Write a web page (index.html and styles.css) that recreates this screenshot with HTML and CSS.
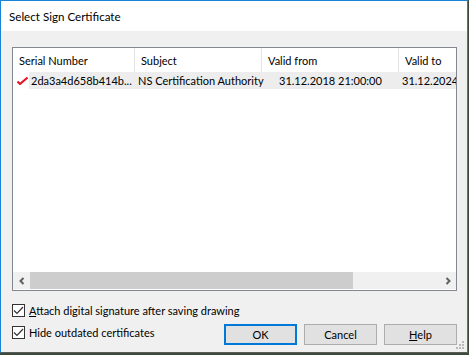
FILE: index.html
```html
<!DOCTYPE html>
<html lang="en">
<head>
  <meta charset="UTF-8" />
  <title>Select Sign Certificate</title>
  <link rel="stylesheet" href="styles.css">
</head>
<body>
  <div class="window">
    <div class="titlebar">Select Sign Certificate</div>

    <div class="content">
      <div class="listbox">
        <div class="grid header">
          <div class="col">Serial Number</div>
          <div class="col">Subject</div>
          <div class="col">Valid from</div>
          <div class="col">Valid to</div>
        </div>
        <div class="row-wrap">
          <svg class="tick" width="11" height="8" viewBox="0 0 11 8">
            <polyline points="0.5,4.5 3,7 10.5,0.5" fill="none" stroke="#e81123" stroke-width="2"/>
          </svg>
          <div class="grid row">
            <div class="cell serial">2da3a4d658b414b...</div>
            <div class="cell subject">NS Certification Authority</div>
            <div class="cell date">31.12.2018 21:00:00</div>
            <div class="cell date-to">31.12.2024</div>
          </div>
        </div>
        <div class="spacer"></div>
        <div class="hscroll">
          <div class="arrow">
            <svg width="8" height="8" viewBox="0 0 8 8"><polyline points="5.5,1 2.5,4 5.5,7" fill="none" stroke="#606060" stroke-width="2"/></svg>
          </div>
          <div class="thumb"></div>
          <div class="track"></div>
          <div class="arrow">
            <svg width="8" height="8" viewBox="0 0 8 8"><polyline points="2.5,1 5.5,4 2.5,7" fill="none" stroke="#606060" stroke-width="2"/></svg>
          </div>
        </div>
      </div>

      <div class="options">
        <label class="check">
          <span class="box"><svg width="11" height="9" viewBox="0 0 11 9"><polyline points="1,4.5 4,7.5 10,1" fill="none" stroke="#333" stroke-width="1.2"/></svg></span>
          <span><u>A</u>ttach digital signature after saving drawing</span>
        </label>
        <div class="last-row">
          <label class="check">
            <span class="box"><svg width="11" height="9" viewBox="0 0 11 9"><polyline points="1,4.5 4,7.5 10,1" fill="none" stroke="#333" stroke-width="1.2"/></svg></span>
            <span>Hide outdated certificates</span>
          </label>
          <div class="buttons">
            <button class="btn default">OK</button>
            <button class="btn">Cancel</button>
            <button class="btn"><u>H</u>elp</button>
          </div>
        </div>
      </div>

      <div class="grip">
        <svg width="10" height="10" viewBox="0 0 10 10" fill="#b8b8b8">
          <rect x="7" y="1" width="2" height="2"/>
          <rect x="4" y="4" width="2" height="2"/><rect x="7" y="4" width="2" height="2"/>
          <rect x="1" y="7" width="2" height="2"/><rect x="4" y="7" width="2" height="2"/><rect x="7" y="7" width="2" height="2"/>
        </svg>
      </div>
    </div>
  </div>
</body>
</html>
```

FILE: styles.css
```css
* {
    margin: 0;
    padding: 0;
    box-sizing: border-box;
}

body {
    background-color: #3b4a3a;
    font-family: 'Lato', sans-serif;
    font-size: 11px;
    line-height: 15px;
    color: #000;
    width: 469px;
    height: 355px;
    overflow: hidden;
}

.window {
    width: 468px;
    height: 353px;
    border: 1px solid #1883d7;
    border-bottom: 1px solid #5a5a5a;
    background-color: #f0f0f0;
    display: flex;
    flex-direction: column;
}

.titlebar {
    height: 30px;
    background-color: #fff;
    padding-left: 8px;
    font-size: 11.6px;
    display: flex;
    align-items: center;
}

.content {
    flex: 1;
    position: relative;
    padding: 16px 10px 0 11px;
}

/* Daftar sertifikat */
.listbox {
    width: 445px;
    height: 244px;
    background-color: #fff;
    border: 1px solid #828790;
    display: flex;
    flex-direction: column;
    overflow: hidden;
}

.grid {
    display: grid;
    grid-template-columns: 122px 127px 137px 137px;
    white-space: nowrap;
}

.header {
    height: 24px;
}

.header .col {
    border-right: 1px solid #e5e5e5;
    padding-left: 6px;
    display: flex;
    align-items: center;
}

.row-wrap {
    position: relative;
    height: 17px;
    padding-left: 16px;
}

.tick {
    position: absolute;
    left: 4px;
    top: 5px;
}

.row {
    height: 17px;
    grid-template-columns: 106px 127px 137px 137px;
    background-color: #ededed;
    align-items: center;
}

.row .cell {
    overflow: hidden;
}

.serial { padding-left: 2px; }
.row .subject { padding-left: 3px; overflow: visible; }
.date { padding-left: 17px; }
.date-to { padding-left: 3px; }

.spacer {
    flex: 1;
}

.hscroll {
    height: 17px;
    display: flex;
    background-color: #f0f0f0;
    margin-bottom: 1px;
}

.hscroll .arrow {
    width: 17px;
    display: flex;
    align-items: center;
    justify-content: center;
}

.hscroll .thumb {
    width: 323px;
    background-color: #cdcdcd;
}

.hscroll .track {
    flex: 1;
}

/* Pilihan dan tombol */
.options {
    margin-top: 13px;
}

.check {
    display: flex;
    align-items: center;
    gap: 4px;
    height: 13px;
}

.box {
    width: 13px;
    height: 13px;
    border: 1px solid #333;
    background-color: #fff;
    display: flex;
    align-items: center;
    justify-content: center;
}

.last-row {
    margin-top: 7px;
    display: flex;
    justify-content: space-between;
    align-items: flex-start;
}

.last-row .check {
    margin-top: 2px;
}

.buttons {
    display: flex;
    gap: 7px;
}

.btn {
    width: 73px;
    height: 21px;
    background-color: #e1e1e1;
    border: 1px solid #adadad;
    font-family: inherit;
    font-size: 11px;
    color: #000;
}

.btn.default {
    border: 2px solid #0078d7;
}

.grip {
    position: absolute;
    right: 2px;
    bottom: 2px;
    line-height: 0;
}
```
